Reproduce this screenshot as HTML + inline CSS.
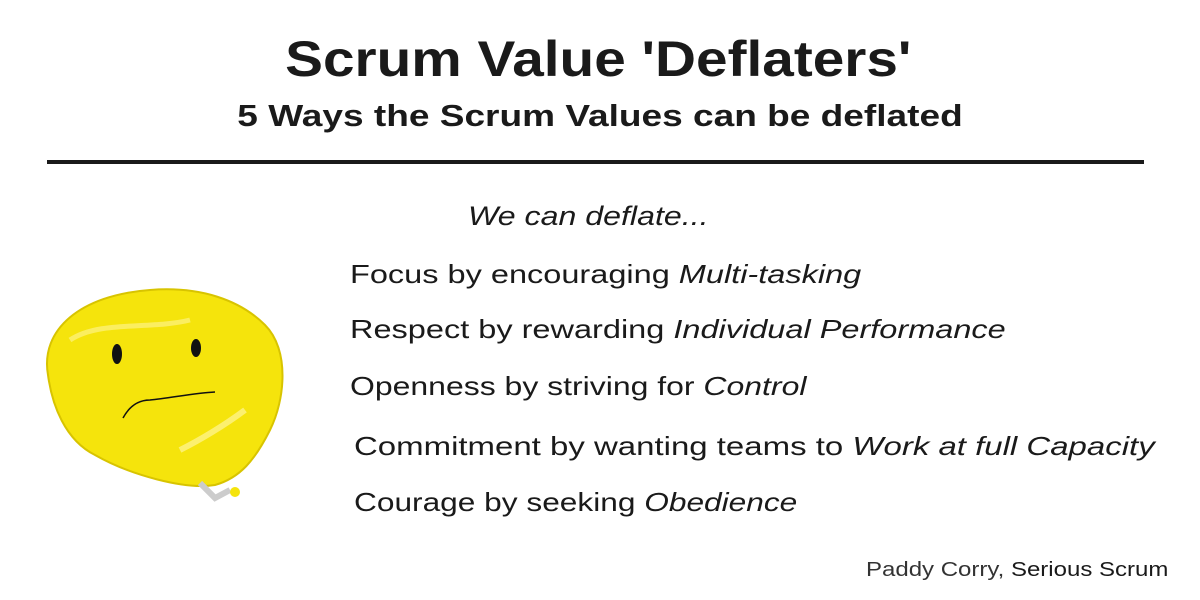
<!DOCTYPE html>
<html><head><style>
body{margin:0;width:1200px;height:600px;background:#fff;font-family:"Liberation Sans",sans-serif;color:#1a1a1a;position:relative;overflow:hidden}
.t{position:absolute;white-space:nowrap;transform-origin:left center}
i{font-style:italic}
</style></head><body>
<div class="t" style="width:1200px;text-align:center;top:30px;font-size:50px;font-weight:bold;left:-2px;transform:scaleX(1.135);transform-origin:598px 50%">Scrum Value 'Deflaters'</div>
<div class="t" style="left:0;width:1200px;text-align:center;top:98px;font-size:31px;font-weight:bold;transform:scaleX(1.195);transform-origin:600px 50%">5 Ways the Scrum Values can be deflated</div>
<div style="position:absolute;left:47px;top:160px;width:1097px;height:4px;background:#1a1a1a"></div>
<div class="t" style="left:468px;top:201px;font-size:27px;transform:scaleX(1.19)"><i>We can deflate...</i></div>
<div class="t" style="left:350px;top:259px;font-size:26px;transform:scaleX(1.25)">Focus by encouraging <i>Multi-tasking</i></div>
<div class="t" style="left:350px;top:314px;font-size:26px;transform:scaleX(1.25)">Respect by rewarding <i>Individual Performance</i></div>
<div class="t" style="left:350px;top:371px;font-size:26px;transform:scaleX(1.229)">Openness by striving for <i>Control</i></div>
<div class="t" style="left:354px;top:431px;font-size:26px;transform:scaleX(1.268)">Commitment by wanting teams to <i>Work at full Capacity</i></div>
<div class="t" style="left:354px;top:487px;font-size:26px;transform:scaleX(1.217)">Courage by seeking <i>Obedience</i></div>
<div class="t" style="left:866px;top:559px;font-size:20px;transform:scaleX(1.2)"><span style="color:#333">Paddy Corry,</span> Serious Scrum</div>
<svg style="position:absolute;left:0;top:0" width="1200" height="600">
<path d="M48,375 C40,330 80,295 150,290 C200,286 240,300 265,325 C290,350 285,400 270,430 C255,460 240,478 215,485 C185,490 130,475 95,455 C65,440 52,405 48,375Z" fill="#f5e40c" stroke="#d8c400" stroke-width="2"/>
<path d="M70,340 C100,320 150,330 190,320" stroke="#fff59a" stroke-width="5" fill="none" opacity=".6"/>
<path d="M180,450 C200,440 225,425 245,410" stroke="#fff59a" stroke-width="6" fill="none" opacity=".7"/>
<ellipse cx="117" cy="354" rx="5" ry="10" fill="#111"/>
<ellipse cx="196" cy="348" rx="5" ry="9" fill="#111"/>
<path d="M123,418 C130,405 140,400 150,400 C170,398 195,393 215,392" stroke="#111" stroke-width="1.5" fill="none"/>
<path d="M200,483 L215,498 L230,490" stroke="#ccc" stroke-width="6" fill="none"/>
<circle cx="235" cy="492" r="5" fill="#f5e40c"/>
</svg>
</body></html>
